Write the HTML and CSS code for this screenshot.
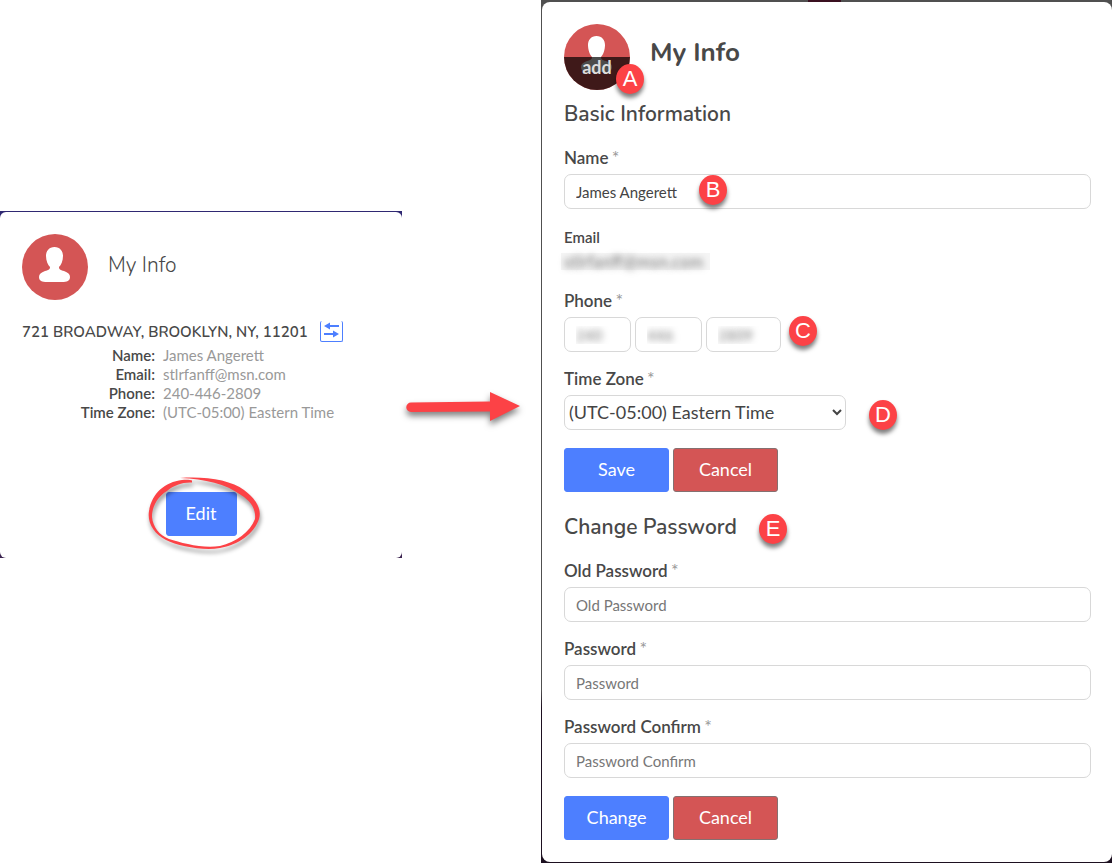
FILE: index.html
```html
<!DOCTYPE html>
<html lang="en">
<head>
  <meta charset="UTF-8">
  <meta name="viewport" content="width=device-width, initial-scale=1">
  <title>My Info</title>
  <link rel="stylesheet" href="styles.css">
</head>
<body>
  <main class="page">
    <section class="summary-frame">
      <div class="summary">
        <div class="header">
          <div class="avatar">
            <svg viewBox="0 0 66 66" width="66" height="66" aria-hidden="true">
              <path fill="#fff" d="M32.500 13C27 13 24 17 24 22C24 27 26 31 28 33C28 36 26 36 23 37C19 38.500 17 40 17 43C17 47 20 48 25 48H40C45 48 48 47 48 43C48 40 46 38.500 42 37C39 36 37 36 37 33C39 31 41 27 41 22C41 17 38 13 32.500 13Z"/>
            </svg>
          </div>
          <h1 class="title title-light">My Info</h1>
        </div>

        <div class="address">
          <h2 class="address-text">721 BROADWAY, BROOKLYN, NY, 11201</h2>
          <button type="button" class="swap" aria-label="Switch address">
            <svg viewBox="0 0 21 20" width="21" height="20" aria-hidden="true">
              <path fill="#4d7fff" d="M3 5L9 1.500V4H18V6H9V8.500ZM18 13L12 9.500V12H3V14H12V16.500Z"/>
            </svg>
          </button>
        </div>

        <dl class="details">
          <dt>Name:</dt><dd>James Angerett</dd>
          <dt>Email:</dt><dd>stlrfanff@msn.com</dd>
          <dt>Phone:</dt><dd>240-446-2809</dd>
          <dt>Time Zone:</dt><dd>(UTC-05:00) Eastern Time</dd>
        </dl>

        <div class="edit-wrap">
          <button type="button" class="btn btn-edit">Edit</button>
          <svg class="edit-ring" viewBox="0 0 116 80" width="116" height="80" aria-hidden="true">
            <path fill="#fc4246" d="M33 3C58 1 84 5 97 15C109 24 115 34 112 44C107 59 91 70 73 73C56 76 31 71 19 65C7 59 0 48 2 36C5 18 18 7 35 5C40 4.500 44 5 45 5.500V7.500C36 7 27 10 20 16C10 22 5 32 5 42C6 52 12 60 22 64C35 68 56 74 73 71C89 67 103 57 108 44C109 35 105 27 94 20C79 9 58 4 33 3Z"/>
          </svg>
        </div>
      </div>
    </section>

    <div class="flow">
      <svg class="arrow" viewBox="0 0 118 32" width="118" height="32" aria-hidden="true">
        <path fill="#fc4246" d="M5 10.500L84 9.500V0L114 14L84 29V19.500L5 20A4.700 4.700 0 0 1 5 10.500Z"/>
      </svg>
    </div>

    <section class="form-frame">
      <div class="form-card">
        <div class="header">
          <div class="marked">
            <button type="button" class="avatar">
              <svg viewBox="0 0 66 66" width="66" height="66" aria-hidden="true">
                <path fill="#fff" d="M32.500 12C27 12 24 16 24 21C24 26 26 31 28 33C28 36 26 36 23 37C19 38.500 17 40 17 43C17 47 20 48 25 48H40C45 48 48 47 48 43C48 40 46 38.500 42 37C39 36 37 36 37 33C39 31 41 26 41 21C41 16 38 12 32.500 12Z"/>
              </svg>
              <span class="avatar-add">add</span>
            </button>
            <span class="badge badge-avatar">A</span>
          </div>
          <h1 class="title">My Info</h1>
        </div>

        <form class="form">
          <h2 class="section-title">Basic Information</h2>
          <div class="field">
            <label for="name">Name <span class="required">*</span></label>
            <div class="marked">
              <input type="text" id="name" class="input" value="James Angerett">
              <span class="badge badge-name">B</span>
            </div>
          </div>
          <div class="field-static">
            <span class="static-label">Email</span>
            <span class="masked-email">stlrfanff@msn.com</span>
          </div>
          <div class="field">
            <label for="area">Phone <span class="required">*</span></label>
            <div class="row marked">
              <input type="text" id="area" class="input masked phone" value="240">
              <input type="text" class="input masked phone" value="446" aria-label="Phone prefix">
              <input type="text" class="input masked phone-last" value="2809" aria-label="Phone line number">
              <span class="badge badge-phone">C</span>
            </div>
          </div>
          <div class="field">
            <label for="zone">Time Zone <span class="required">*</span></label>
            <div class="row marked">
              <select id="zone" class="input select">
                <option>(UTC-05:00) Eastern Time</option>
              </select>
              <span class="badge badge-zone">D</span>
            </div>
          </div>
          <div class="row buttons">
            <button type="button" class="btn">Save</button>
            <button type="button" class="btn btn-cancel">Cancel</button>
          </div>
        </form>

        <form class="form form-password">
          <h2 class="section-title marked">Change Password <span class="badge badge-password">E</span></h2>
          <div class="field">
            <label for="old">Old Password <span class="required">*</span></label>
            <input type="password" id="old" class="input" placeholder="Old Password">
          </div>
          <div class="field">
            <label for="password">Password <span class="required">*</span></label>
            <input type="password" id="password" class="input" placeholder="Password">
          </div>
          <div class="field">
            <label for="confirm">Password Confirm <span class="required">*</span></label>
            <input type="password" id="confirm" class="input" placeholder="Password Confirm">
          </div>
          <div class="row buttons">
            <button type="button" class="btn">Change</button>
            <button type="button" class="btn btn-cancel">Cancel</button>
          </div>
        </form>
      </div>
    </section>
  </main>
</body>
</html>
```
FILE: styles.css
```css
* {
  box-sizing: border-box;
}

body {
  margin: 0;
  background-color: #fff;
  color: #484848;
  font-family: Lato, sans-serif;
  font-size: 15px;
}

h1,
h2,
dl,
dd {
  margin: 0;
}

button,
input,
select {
  font-family: inherit;
}

.page {
  display: grid;
  grid-template-columns: 402fr 139fr 571fr;
  align-items: start;
}

/* read-only card */
.summary-frame {
  margin-top: 211px;
  padding-top: 1px;
  background: linear-gradient(#2f2872, #3c2450);
}

.summary {
  padding: 22px;
  background-color: #fff;
  border-radius: 6px;
}

.header {
  display: flex;
  gap: 20px;
}

.avatar {
  display: block;
  position: relative;
  width: 66px;
  height: 66px;
  padding: 0;
  border: none;
  border-radius: 50%;
  overflow: hidden;
  background-color: #d45555;
}

.avatar svg {
  display: block;
}

.title {
  font-family: Nunito, "Noto Sans", sans-serif;
  font-size: 26px;
  font-weight: 700;
  line-height: 58px;
}

.title-light {
  font-size: 21px;
  font-weight: 300;
  line-height: 62px;
}

.address {
  display: flex;
  align-items: center;
  gap: 12px;
  margin-top: 21px;
}

.address-text {
  font-family: Nunito, "Noto Sans", sans-serif;
  font-size: 15px;
  font-weight: 600;
  line-height: 20px;
  white-space: nowrap;
}

.swap {
  display: flex;
  padding: 0;
  border: 1px solid #4d7fff;
  border-top: none;
  border-radius: 2px;
  background: none;
}

.details {
  display: grid;
  grid-template-columns: 133px 1fr;
  column-gap: 8px;
  margin-top: 4px;
  line-height: 19px;
}

.details dt {
  text-align: right;
  font-weight: 600;
}

.details dd {
  color: #999;
}

.edit-wrap {
  display: flex;
  justify-content: center;
  position: relative;
  margin-top: 70px;
}

.edit-ring {
  position: absolute;
  top: -17px;
  left: 50%;
  margin-left: -54px;
  pointer-events: none;
  overflow: visible;
  filter: drop-shadow(1px 4px 2px rgba(0, 0, 0, 0.4));
}

/* arrow between the cards */
.flow {
  padding: 392px 0 0 4px;
}

.arrow {
  display: block;
  overflow: visible;
  filter: drop-shadow(0 4px 3px rgba(0, 0, 0, 0.5));
}

/* edit card */
.form-frame {
  padding: 2px 0 1px 1px;
  background: linear-gradient(90deg, transparent 267px, #3a1020 267px 300px, transparent 300px) 0 0 / 100% 2px no-repeat,
    linear-gradient(#505050 80%, #1d1020 82%);
}

.form-card {
  padding: 22px 21px 22px 22px;
  background-color: #fff;
  border-radius: 8px;
}

.marked {
  position: relative;
}

.avatar-add {
  position: absolute;
  left: 0;
  right: 0;
  bottom: 0;
  height: 33px;
  background-color: rgba(0, 0, 0, 0.7);
  color: #ddd;
  font-size: 18px;
  font-weight: 700;
  line-height: 20px;
  text-align: center;
}

.form {
  display: flex;
  flex-direction: column;
  margin-top: 12px;
}

.form-password {
  margin-top: 23px;
}

.section-title {
  height: 24px;
  margin-bottom: 22px;
  font-family: Nunito, "Noto Sans", sans-serif;
  font-size: 21px;
  font-weight: 600;
  line-height: 24px;
}

.field {
  display: flex;
  flex-direction: column;
  gap: 6px;
  margin-bottom: 17px;
}

.field label {
  height: 20px;
  font-size: 17px;
  font-weight: 600;
  line-height: 20px;
}

.required {
  margin-left: -1px;
  color: #999;
  font-size: 18px;
  font-weight: 400;
  line-height: 1px;
}

.field-static {
  display: flex;
  flex-direction: column;
  align-items: flex-start;
  margin-bottom: 17px;
}

.static-label {
  font-weight: 600;
  line-height: 22px;
}

.masked-email {
  margin: 5px 0 4px -3px;
  padding: 0 7px 0 3px;
  background-color: #f5f5f5;
  color: transparent;
  font-size: 17px;
  line-height: 17px;
  text-shadow: 0 0 6px #777;
}

.input {
  width: 100%;
  height: 35px;
  padding: 0 11px;
  border: 1px solid #d8d8d8;
  border-radius: 7px;
  background-color: #fff;
  color: #444;
  font-size: 15px;
}

.input::placeholder {
  color: #777;
  opacity: 1;
}

.row {
  display: flex;
  align-items: center;
  gap: 4px;
}

.buttons {
  padding-top: 1px;
}

.input.masked {
  color: transparent;
  text-shadow: 0 0 7px #777;
}

.phone {
  width: 67px;
}

.phone-last {
  width: 75px;
}

.select {
  width: 282px;
  padding: 0 0 2px;
  font-size: 18px;
}

.btn {
  width: 105px;
  height: 44px;
  padding: 0 0 2px;
  border: 1px solid #4d7fff;
  border-radius: 3px;
  background-color: #4d7fff;
  color: #fff;
  font-size: 18px;
  cursor: pointer;
}

.btn-cancel {
  border-color: #857070;
  background-color: #d45555;
}

.btn-edit {
  width: 71px;
}

/* lettered markers */
.badge {
  position: absolute;
  width: 28px;
  height: 30px;
  border-radius: 50%;
  background-color: #fc4246;
  box-shadow: 0 4px 4px rgba(0, 0, 0, 0.5);
  color: #fff;
  font-family: "Liberation Sans", Arial, sans-serif;
  font-size: 22px;
  font-weight: 400;
  line-height: 30px;
  text-align: center;
}

.badge-avatar {
  top: 40px;
  left: 52px;
}

.badge-name {
  top: 1px;
  left: 135px;
}

.badge-phone {
  top: -1px;
  left: 225px;
}

.badge-zone {
  top: 5px;
  left: 305px;
}

.badge-password {
  top: -1px;
  left: 195px;
}
```
